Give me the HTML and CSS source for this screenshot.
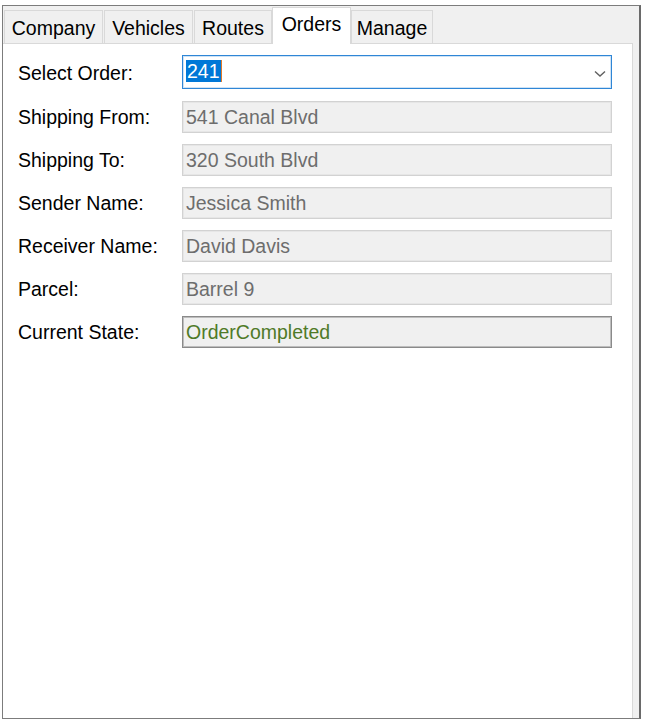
FILE: index.html
```html
<!DOCTYPE html>
<html>
<head>
<meta charset="utf-8">
<link rel="stylesheet" href="styles.css">
</head>
<body>
<div class="window">
  <div class="tabstrip">
    <div class="tab t-company">Company</div>
    <div class="tab t-vehicles">Vehicles</div>
    <div class="tab t-routes">Routes</div>
    <div class="tab active t-orders">Orders</div>
    <div class="tab t-manage">Manage</div>
  </div>
  <div class="panel">
    <div class="form">
      <div class="label">Select Order:</div>
      <div class="combo">
        <span class="sel">241</span><span class="caret"></span>
        <svg class="chev" width="12" height="8" viewBox="0 0 12 8"><path d="M1 1.5 L6 6 L11 1.5" fill="none" stroke="#606060" stroke-width="1.4"/></svg>
      </div>
      <div class="label">Shipping From:</div>
      <div class="field">541 Canal Blvd</div>
      <div class="label">Shipping To:</div>
      <div class="field">320 South Blvd</div>
      <div class="label">Sender Name:</div>
      <div class="field">Jessica Smith</div>
      <div class="label">Receiver Name:</div>
      <div class="field">David Davis</div>
      <div class="label">Parcel:</div>
      <div class="field">Barrel 9</div>
      <div class="label">Current State:</div>
      <div class="field state">OrderCompleted</div>
    </div>
  </div>
</div>
</body>
</html>
```
FILE: styles.css
```css
html, body {
  margin: 0;
  padding: 0;
  background: #ffffff;
  font-family: "Liberation Sans", Arial, sans-serif;
  font-size: 19.5px;
  color: #000;
}

.window {
  box-sizing: border-box;
  margin: 5px 0 0 2px;
  width: 639px;
  height: 714px;
  border: 1px solid #7c7c7c;
  border-right: 2px solid #6a6a6a;
  background: #f0f0f0;
  display: flex;
  flex-direction: column;
}

.tabstrip {
  display: flex;
  align-items: flex-end;
  height: 37px;
  padding-left: 1px;
  flex: none;
}

.tab {
  box-sizing: border-box;
  height: 33px;
  border: 1px solid #d9d9d9;
  border-bottom: none;
  background: #f0f0f0;
  display: flex;
  align-items: center;
  justify-content: center;
  margin-right: 1px;
  padding-top: 3px;
}

.t-company { width: 99px; }
.t-vehicles { width: 89px; }
.t-routes { width: 78px; }
.t-orders { width: 79px; }
.t-manage { width: 82px; }

.tab.active {
  height: 37px;
  background: #ffffff;
  margin-bottom: -1px;
  position: relative;
  z-index: 1;
  padding-top: 0;
  padding-bottom: 4px;
  margin-left: -1px;
  margin-right: 0;
}

.panel {
  box-sizing: border-box;
  flex: 1;
  width: 630px;
  background: #ffffff;
  border: 1px solid #d9d9d9;
  border-left: none;
  border-bottom: none;
  padding: 11px 0 0 15px;
}

.form {
  display: grid;
  grid-template-columns: 164px 430px;
  grid-template-rows: 35px repeat(6, 32px);
  row-gap: 11px;
}

.label {
  display: flex;
  align-items: center;
  color: #000;
  padding-top: 1px;
}

.combo {
  box-sizing: border-box;
  height: 34px;
  border: 1px solid #2f86d6;
  box-shadow: inset 0 0 0 1px #cfe3f5;
  background: #fff;
  display: flex;
  align-items: center;
  padding-left: 3px;
  position: relative;
}

.sel {
  background: #0078d7;
  color: #fff;
  line-height: 22px;
  padding: 0 1px;
  margin-top: -2px;
}

.caret {
  width: 1px;
  height: 22px;
  background: #e07a2a;
  margin-top: -2px;
}

.chev {
  position: absolute;
  right: 5px;
  top: 14px;
}

.field {
  box-sizing: border-box;
  height: 32px;
  border: 1px solid #d2d2d2;
  box-shadow: inset 0 0 0 1px #e6e6e6;
  background: #f0f0f0;
  color: #6d6d6d;
  display: flex;
  align-items: center;
  padding-left: 3px;
  padding-top: 1px;
}

.field.state {
  border: 1px solid #8a8a8a;
  box-shadow: inset 0 0 0 1px #bdbdbd;
  color: #4f7a28;
}
```
